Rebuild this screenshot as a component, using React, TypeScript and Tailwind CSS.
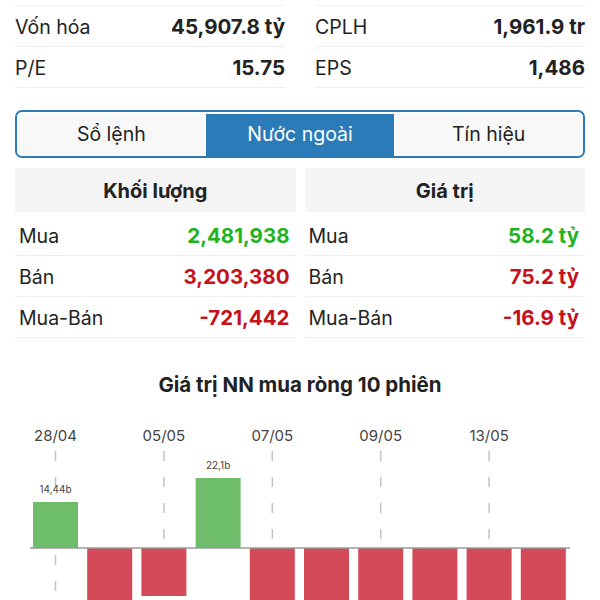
import React from "react";

const stats = [
  [
    { label: "Vốn hóa", value: "45,907.8 tỷ" },
    { label: "P/E", value: "15.75" },
  ],
  [
    { label: "CPLH", value: "1,961.9 tr" },
    { label: "EPS", value: "1,486" },
  ],
];

const tables = [
  {
    title: "Khối lượng",
    rows: [
      { label: "Mua", value: "2,481,938", up: true },
      { label: "Bán", value: "3,203,380", up: false },
      { label: "Mua-Bán", value: "-721,442", up: false },
    ],
  },
  {
    title: "Giá trị",
    rows: [
      { label: "Mua", value: "58.2 tỷ", up: true },
      { label: "Bán", value: "75.2 tỷ", up: false },
      { label: "Mua-Bán", value: "-16.9 tỷ", up: false },
    ],
  },
];

// net foreign value per session, px height (positive = above baseline)
const bars = [46, -80, -48, 70, -85, -90, -75, -82, -88, -78];
const barLabels: Record<number, string> = { 0: "14,44b", 3: "22,1b" };
const dates = ["28/04", "05/05", "07/05", "09/05", "13/05"];

function Chart() {
  const base = 142;
  const step = 54.2;
  const x0 = 33;
  const w = 45;
  return (
    <svg width="600" height="240" className="block">
      {dates.map((d, i) => {
        const cx = x0 + w / 2 + i * 2 * step;
        return (
          <g key={d}>
            <text
              x={cx}
              y={31}
              textAnchor="middle"
              dominantBaseline="middle"
              fontSize="15"
              fill="#444"
              fontFamily="Inter, sans-serif"
            >
              {d}
            </text>
            <line
              x1={cx}
              x2={cx}
              y1={45}
              y2={240}
              stroke="#c4c4c4"
              strokeWidth="1.5"
              strokeDasharray="10 16"
            />
          </g>
        );
      })}
      {bars.map((v, i) => {
        const x = x0 + i * step;
        const y = v > 0 ? base - v : base;
        return (
          <rect
            key={i}
            x={x}
            y={y}
            width={w}
            height={Math.abs(v)}
            fill={v > 0 ? "#6dbd6a" : "#d44a59"}
          />
        );
      })}
      {Object.entries(barLabels).map(([i, t]) => {
        const idx = Number(i);
        const cx = x0 + w / 2 + idx * step;
        return (
          <text
            key={i}
            x={cx}
            y={base - bars[idx] - 12}
            textAnchor="middle"
            dominantBaseline="middle"
            fontSize="10"
            fill="#444"
            fontFamily="Inter, sans-serif"
          >
            {t}
          </text>
        );
      })}
      <line x1={30} x2={570} y1={base} y2={base} stroke="#9a9a9a" strokeWidth="1.5" />
    </svg>
  );
}

export default function App() {
  return (
    <div className="w-[600px] h-[600px] overflow-hidden bg-white text-[#222] font-['Inter',sans-serif]">
      <div className="grid grid-cols-2 gap-x-[30px] px-[15px] pt-[5px]">
        {stats.map((col, ci) => (
          <div key={ci} className="border-t border-[#f0f0f0]">
            {col.map((s) => (
              <div
                key={s.label}
                className="flex h-[41px] items-center justify-between border-b border-[#eeeeee] pt-[3px] text-[19.5px]"
              >
                <span>{s.label}</span>
                <span className="text-[20.5px] font-bold">{s.value}</span>
              </div>
            ))}
          </div>
        ))}
      </div>

      <div className="mx-[15px] mt-[22px] flex h-[48px] overflow-hidden rounded-[7px] border-2 border-[#2b7bb9] pt-[2px] text-[19.5px]">
        <div className="flex flex-1 items-center justify-center bg-[#f8f8f8]">Sổ lệnh</div>
        <div className="flex flex-1 items-center justify-center bg-[#2b7bb9] text-white">Nước ngoài</div>
        <div className="flex flex-1 items-center justify-center bg-[#f8f8f8]">Tín hiệu</div>
      </div>

      <div className="mt-[10px] grid grid-cols-2 gap-x-[9px] px-[15px]">
        {tables.map((t) => (
          <div key={t.title}>
            <div className="flex h-[44px] items-center justify-center bg-[#f5f5f5] pt-[2px] text-[20px] font-bold">
              {t.title}
            </div>
            <div className="mt-[3px]">
              {t.rows.map((r) => (
                <div
                  key={r.label}
                  className="flex h-[41px] items-center justify-between border-b border-[#eeeeee] pl-[4px] pr-[6px] pt-[3px] text-[19.5px]"
                >
                  <span>{r.label}</span>
                  <span
                    className={
                      r.up
                        ? "text-[20.5px] font-bold text-[#1fb31f]"
                        : "text-[20.5px] font-bold text-[#c4111b]"
                    }
                  >
                    {r.value}
                  </span>
                </div>
              ))}
            </div>
          </div>
        ))}
      </div>

      <div className="mt-[36px] text-center text-[20.5px] font-bold leading-[22px]">
        Giá trị NN mua ròng 10 phiên
      </div>
      <div className="mt-[10px]">
        <Chart />
      </div>
    </div>
  );
}
